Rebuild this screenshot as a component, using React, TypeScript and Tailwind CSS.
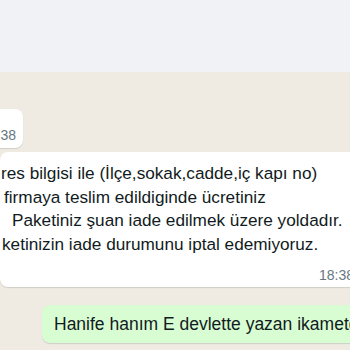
import React from 'react';

const LINES = [
  { text: 'res bilgisi ile (İlçe,sokak,cadde,iç kapı no)', pad: 'pl-[1px]' },
  { text: 'firmaya teslim edildiginde ücretiniz', pad: 'pl-[4px]' },
  { text: 'Paketiniz şuan iade edilmek üzere yoldadır.', pad: 'pl-[12px]' },
  { text: 'ketinizin iade durumunu iptal edemiyoruz.', pad: 'pl-[2px]' },
];

const App = () => {
  return (
    <div className="w-[350px] h-[350px] overflow-hidden flex flex-col font-['Liberation_Sans','Open_Sans',sans-serif] text-[#111b21]">
      <div className="h-[72px] shrink-0 bg-[#f0f2f5]" />

      <div className="flex-1 bg-[#efeae2] flex flex-col">
        {/* previous incoming bubble, mostly off screen */}
        <div className="mt-[37px] ml-[-60px] w-[83px] h-[39px] bg-white rounded-r-[8px] shadow-[0_1px_1px_rgba(11,20,26,0.13)] flex items-end justify-end pr-[7px] pb-[6px]">
          <span className="text-[14px] leading-none text-[#667781]">18:38</span>
        </div>

        {/* incoming message */}
        <div className="mt-[4px] w-[400px] h-[135px] bg-white shadow-[0_1px_1px_rgba(11,20,26,0.13)] rounded-[8px] flex flex-col pt-[10px]">
          {LINES.map((line) => (
            <div key={line.text} className={`${line.pad} whitespace-nowrap text-[17.2px] leading-[23.5px]`}>
              {line.text}
            </div>
          ))}
          <div className="mt-auto mb-[5px] pl-[319px] whitespace-nowrap text-[14px] leading-none text-[#667781]">18:38</div>
        </div>

        {/* outgoing message */}
        <div className="mt-[18px] ml-[42px] w-[360px] h-[38px] bg-[#d9fdd3] rounded-[8px] shadow-[0_1px_1px_rgba(11,20,26,0.13)] flex items-center pl-[12px]">
          <span className="whitespace-nowrap text-[17.5px]">Hanife hanım E devlette yazan ikametgah</span>
        </div>
      </div>
    </div>
  );
};

export default App;
